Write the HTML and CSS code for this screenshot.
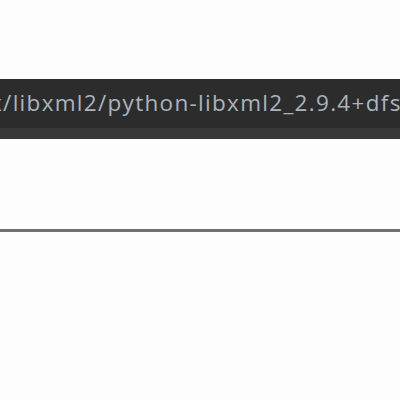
FILE: index.html
```
<!DOCTYPE html>
<html>
<head>
<meta charset="utf-8">
<link rel="stylesheet" href="styles.css">
</head>
<body>
<div class="page">
  <div class="top"></div>
  <div class="bar">
    <div class="path">x/libxml2/python-libxml2_2.9.4+dfsg1-7</div>
    <div class="bar-bottom"></div>
  </div>
  <div class="gap"></div>
  <div class="rule"></div>
</div>
</body>
</html>
```
FILE: styles.css
```
html, body { margin: 0; padding: 0; background: #fdfdfd; }
.page { width: 400px; height: 400px; overflow: hidden; }
.top { height: 79px; }
.bar { background: #2c2c2c; height: 60px; display: flex; flex-direction: column; }
.path {
  height: 49px;
  line-height: 48px;
  font-family: "Open Sans", "DejaVu Sans", sans-serif;
  font-size: 22.5px;
  letter-spacing: 1.3px;
  color: #aab4be;
  white-space: nowrap;
  margin-left: -10px;
}
.bar-bottom { height: 11px; background: #383838; }
.gap { height: 90px; }
.rule { height: 3px; background: #707070; }
```
